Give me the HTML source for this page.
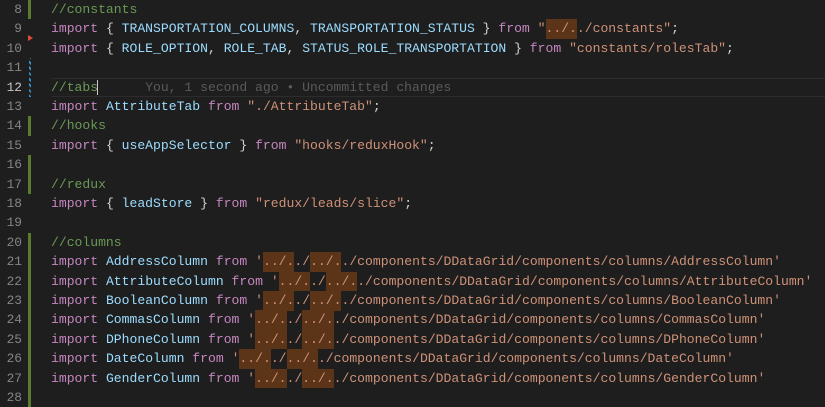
<!DOCTYPE html>
<html><head><meta charset="utf-8"><style>
html,body{margin:0;padding:0;background:#1e1e1e;width:825px;height:406px;overflow:hidden}
body{font-family:"Liberation Mono","DejaVu Sans Mono",monospace;font-size:13.08px;color:#d4d4d4}
.r{position:absolute;left:0;width:825px;height:19.4px;line-height:19.4px;white-space:pre}
.n{position:absolute;left:0;width:22px;text-align:right;color:#858585;font-size:12.85px}
.c{position:absolute;left:51px}
.k{color:#c586c0}.v{color:#9cdcfe}.s{color:#ce9178}.m{color:#6a9955}
.h{background:#5c3418;display:inline-block;height:19.6px;vertical-align:top}
.g{position:absolute;left:28px;width:3px;background:#587c2c}
.cur{border-top:1px solid #2c2c2c;border-bottom:1px solid #2c2c2c;box-sizing:border-box}
.ghost{color:#5a5a5a}
</style></head><body>
<div class="g" style="top:0;height:19.4px"></div>
<div class="g" style="top:116.4px;height:19.4px"></div>
<div class="g" style="top:155.2px;height:38.8px"></div>
<div class="g" style="top:232.8px;height:174px"></div>
<div style="position:absolute;left:29px;top:58px;width:2px;height:39px;background:repeating-linear-gradient(45deg,#3b8fc9 0 2px,#1e1e1e 2px 4px)"></div>
<div style="position:absolute;left:28px;top:35px;width:0;height:0;border-top:3.5px solid transparent;border-bottom:3.5px solid transparent;border-left:5px solid #e04a3a"></div>

<div class="r" style="top:0"><span class="n">8</span><span class="c m">//constants</span></div>
<div class="r" style="top:19.4px"><span class="n">9</span><span class="c"><span class="k">import</span> { <span class="v">TRANSPORTATION_COLUMNS</span>, <span class="v">TRANSPORTATION_STATUS</span> } <span class="k">from</span> <span class="s">"<span class="h">../.</span>./constants"</span>;</span></div>
<div class="r" style="top:38.8px"><span class="n">10</span><span class="c"><span class="k">import</span> { <span class="v">ROLE_OPTION</span>, <span class="v">ROLE_TAB</span>, <span class="v">STATUS_ROLE_TRANSPORTATION</span> } <span class="k">from</span> <span class="s">"constants/rolesTab"</span>;</span></div>
<div class="r" style="top:58.2px"><span class="n">11</span></div>
<div class="r cur" style="top:77.6px;left:51px;width:774px"></div>
<div class="r" style="top:77.6px"><span class="n" style="color:#c6c6c6">12</span><span class="c"><span class="m">//tabs</span><span style="border-left:1.5px solid #c8c8c8;margin-left:-1px"></span>      <span class="ghost">You, 1 second ago • Uncommitted changes</span></span></div>
<div class="r" style="top:97px"><span class="n">13</span><span class="c"><span class="k">import</span> <span class="v">AttributeTab</span> <span class="k">from</span> <span class="s">"./AttributeTab"</span>;</span></div>
<div class="r" style="top:116.4px"><span class="n">14</span><span class="c m">//hooks</span></div>
<div class="r" style="top:135.8px"><span class="n">15</span><span class="c"><span class="k">import</span> { <span class="v">useAppSelector</span> } <span class="k">from</span> <span class="s">"hooks/reduxHook"</span>;</span></div>
<div class="r" style="top:155.2px"><span class="n">16</span></div>
<div class="r" style="top:174.6px"><span class="n">17</span><span class="c m">//redux</span></div>
<div class="r" style="top:194px"><span class="n">18</span><span class="c"><span class="k">import</span> { <span class="v">leadStore</span> } <span class="k">from</span> <span class="s">"redux/leads/slice"</span>;</span></div>
<div class="r" style="top:213.4px"><span class="n">19</span></div>
<div class="r" style="top:232.8px"><span class="n">20</span><span class="c m">//columns</span></div>
<div class="r" style="top:252.2px"><span class="n">21</span><span class="c"><span class="k">import</span> <span class="v">AddressColumn</span> <span class="k">from</span> <span class="s">'<span class="h">../.</span>./<span class="h">../.</span>./components/DDataGrid/components/columns/AddressColumn'</span></span></div>
<div class="r" style="top:271.6px"><span class="n">22</span><span class="c"><span class="k">import</span> <span class="v">AttributeColumn</span> <span class="k">from</span> <span class="s">'<span class="h">../.</span>./<span class="h">../.</span>./components/DDataGrid/components/columns/AttributeColumn'</span></span></div>
<div class="r" style="top:291px"><span class="n">23</span><span class="c"><span class="k">import</span> <span class="v">BooleanColumn</span> <span class="k">from</span> <span class="s">'<span class="h">../.</span>./<span class="h">../.</span>./components/DDataGrid/components/columns/BooleanColumn'</span></span></div>
<div class="r" style="top:310.4px"><span class="n">24</span><span class="c"><span class="k">import</span> <span class="v">CommasColumn</span> <span class="k">from</span> <span class="s">'<span class="h">../.</span>./<span class="h">../.</span>./components/DDataGrid/components/columns/CommasColumn'</span></span></div>
<div class="r" style="top:329.8px"><span class="n">25</span><span class="c"><span class="k">import</span> <span class="v">DPhoneColumn</span> <span class="k">from</span> <span class="s">'<span class="h">../.</span>./<span class="h">../.</span>./components/DDataGrid/components/columns/DPhoneColumn'</span></span></div>
<div class="r" style="top:349.2px"><span class="n">26</span><span class="c"><span class="k">import</span> <span class="v">DateColumn</span> <span class="k">from</span> <span class="s">'<span class="h">../.</span>./<span class="h">../.</span>./components/DDataGrid/components/columns/DateColumn'</span></span></div>
<div class="r" style="top:368.6px"><span class="n">27</span><span class="c"><span class="k">import</span> <span class="v">GenderColumn</span> <span class="k">from</span> <span class="s">'<span class="h">../.</span>./<span class="h">../.</span>./components/DDataGrid/components/columns/GenderColumn'</span></span></div>
<div class="r" style="top:388px"><span class="n">28</span></div>
</body></html>
